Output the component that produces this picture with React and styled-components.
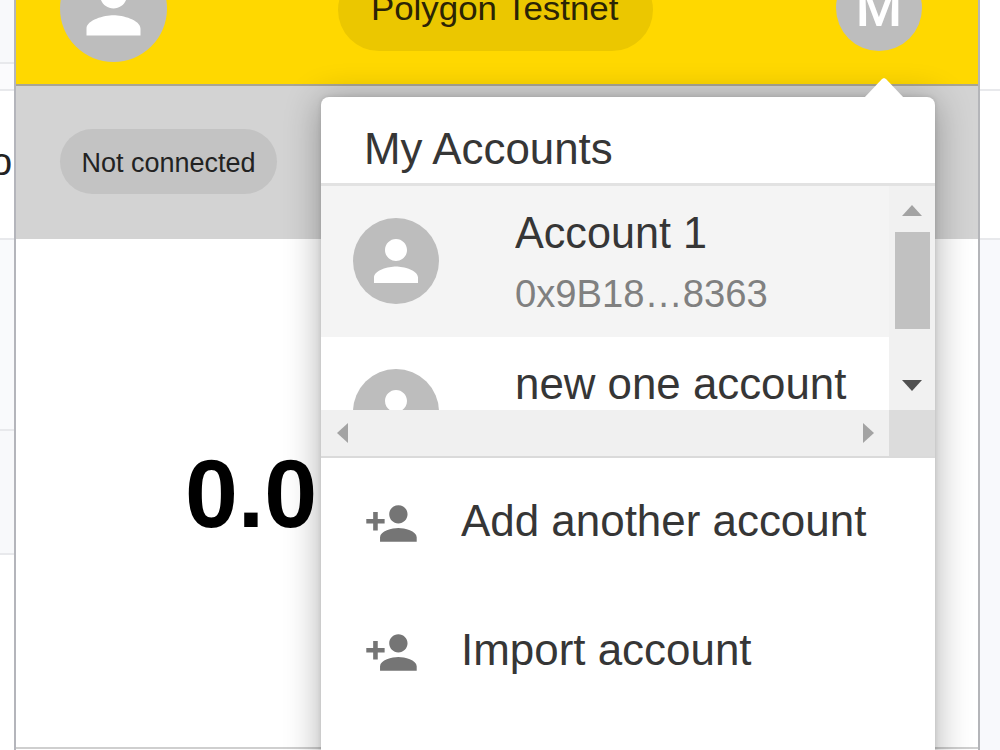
import React from "react";
import styled, { createGlobalStyle } from "styled-components";

const GlobalStyle = createGlobalStyle`
  * { box-sizing: border-box; }
  body {
    margin: 0;
    overflow: hidden;
    background: #fff;
    font-family: "Liberation Sans", Arial, sans-serif;
  }
`;

const Page = styled.div`
  position: relative;
  display: flex;
  width: 1000px;
  height: 750px;
  overflow: hidden;
`;

const Gutter = styled.div`
  width: ${(p) => p.$width}px;
  flex: none;
  display: flex;
  flex-direction: column;
  overflow: hidden;
`;

const Cell = styled.div`
  flex: none;
  display: flex;
  align-items: center;
  height: ${(p) => p.$height}px;
  background: ${(p) => p.$bg || "#fff"};
  border-bottom: 2px solid #e8e9ec;
`;

const CutLetter = styled.span`
  margin: -5px 0 0 -9px;
  font-size: 38px;
  line-height: 1;
  color: #222;
`;

const Wallet = styled.main`
  width: 966px;
  flex: none;
  display: flex;
  flex-direction: column;
  border-left: 2px solid #b4b5bb;
  border-right: 2px solid #b4b5b9;
  background: #fff;
`;

const TopBar = styled.header`
  height: 86px;
  flex: none;
  display: flex;
  justify-content: space-between;
  align-items: flex-start;
  padding: 0 56px 0 44px;
  background: #ffd800;
  border-bottom: 2px solid #a9a594;
`;

const Avatar = styled.div`
  flex: none;
  display: flex;
  align-items: center;
  justify-content: center;
  width: ${(p) => p.$size}px;
  height: ${(p) => p.$size}px;
  margin-top: ${(p) => p.$top || 0}px;
  border-radius: 50%;
  background: #bdbdbd;
  color: #fff;
  font-family: Roboto, "Liberation Sans", sans-serif;
  font-size: 53px;
  font-weight: 500;
  line-height: 1;
`;

const NetworkChip = styled.div`
  width: 315px;
  height: 82px;
  margin: -31px 0 0 -13px;
  padding-bottom: 3px;
  display: flex;
  align-items: center;
  justify-content: center;
  border-radius: 41px;
  background: #ebc700;
  color: #2b2405;
  font-size: 34px;
`;

const StatusBar = styled.section`
  height: 153px;
  flex: none;
  padding: 43px 44px;
  background: #d3d3d3;
`;

const StatusChip = styled.div`
  width: 217px;
  height: 65px;
  padding-top: 4px;
  display: flex;
  align-items: center;
  justify-content: center;
  border-radius: 33px;
  background: #c3c3c3;
  color: #222;
  font-size: 27px;
`;

const BalanceArea = styled.section`
  height: 510px;
  flex: none;
  padding: 199px 0 0 169px;
  border-bottom: 2px solid #cfcfcf;
`;

const Balance = styled.div`
  font-size: 97px;
  font-weight: 700;
  line-height: 111px;
  color: #000;
`;

const Menu = styled.aside`
  position: absolute;
  left: 321px;
  top: 97px;
  width: 614px;
  height: 700px;
  display: flex;
  flex-direction: column;
  border-radius: 8px;
  background: #fff;
  color: #363636;
  box-shadow: 0 4px 36px rgba(0, 0, 0, 0.32), 0 0 5px rgba(0, 0, 0, 0.12);
`;

const Pointer = styled.svg`
  position: absolute;
  top: -19px;
  left: 543px;
`;

const MenuTitle = styled.h1`
  height: 89px;
  flex: none;
  margin: 0;
  padding: 26px 0 0 43px;
  border-bottom: 3px solid #e2e2e2;
  font-size: 45px;
  font-weight: 400;
  line-height: 51px;
`;

const Label = styled.span`
  display: inline-block;
  white-space: nowrap;
  transform: scaleX(${(p) => p.$stretch || 1});
  transform-origin: ${(p) => p.$origin || "left"} center;
`;

const Scroller = styled.div`
  flex: none;
  height: 272px;
  display: grid;
  grid-template-columns: 568px 46px;
  grid-template-rows: 224px 46px;
  border-bottom: 2px solid #dadada;
`;

const AccountList = styled.div`
  overflow: hidden;
`;

const Account = styled.div`
  height: 151px;
  display: flex;
  padding: 32px 0 0 32px;
  background: ${(p) => (p.$active ? "#f4f4f4" : "#fff")};
`;

const AccountText = styled.div`
  margin: -11px 0 0 76px;
  display: flex;
  flex-direction: column;
`;

const AccountName = styled.div`
  font-size: 44.5px;
  line-height: 51px;
`;

const Address = styled.div`
  margin-top: 14px;
  font-size: 38px;
  line-height: 44px;
  color: #808080;
`;

const VerticalBar = styled.div`
  display: flex;
  flex-direction: column;
  align-items: center;
  padding-top: 19px;
  background: #f1f1f1;
`;

const Thumb = styled.div`
  width: 35px;
  height: 97px;
  margin: 16px 0 51px;
  background: #c1c1c1;
`;

const HorizontalBar = styled.div`
  display: flex;
  align-items: center;
  justify-content: space-between;
  padding: 0 15px 0 16px;
  background: #f0f0f0;
`;

const Corner = styled.div`
  background: #dcdcdc;
`;

const Action = styled.div`
  height: 129px;
  flex: none;
  display: flex;
  align-items: center;
  padding: 1px 0 0 43px;
  font-size: 44.5px;
  line-height: 51px;

  ${Label} {
    margin-top: -6px;
  }
`;

const ActionIcon = styled.svg`
  flex: none;
  margin-right: 42px;
  fill: #757575;
`;

const PersonIcon = ({ size }) => (
  <svg width={size} height={size} viewBox="0 0 24 24" fill="#fff">
    <path d="M12 12c2.21 0 4-1.79 4-4s-1.79-4-4-4-4 1.79-4 4 1.79 4 4 4zm0 2c-2.67 0-8 1.34-8 4v2h16v-2c0-2.66-5.33-4-8-4z" />
  </svg>
);

const AddPersonIcon = () => (
  <ActionIcon width="55" height="55" viewBox="0 0 24 24">
    <path d="M15 12c2.21 0 4-1.79 4-4s-1.79-4-4-4-4 1.79-4 4 1.79 4 4 4zm-9-2V7H4v3H1v2h3v3h2v-3h3v-2H6zm9 4c-2.67 0-8 1.34-8 4v2h16v-2c0-2.66-5.33-4-8-4z" />
  </ActionIcon>
);

const ARROWS = {
  up: [20, 11, "0,11 10,0 20,11"],
  down: [20, 11, "0,0 20,0 10,11"],
  left: [11, 20, "11,0 11,20 0,10"],
  right: [11, 20, "0,0 11,10 0,20"],
};

const Arrow = ({ dir, color = "#a3a3a3" }) => {
  const [w, h, points] = ARROWS[dir];
  return (
    <svg width={w} height={h}>
      <polygon points={points} fill={color} />
    </svg>
  );
};

export default function App() {
  return (
    <Page>
      <GlobalStyle />
      <Gutter $width={14}>
        <Cell $height={64} $bg="#f8f9fb" />
        <Cell $height={27} $bg="#fbfbfd" />
        <Cell $height={149}>
          <CutLetter>o</CutLetter>
        </Cell>
        <Cell $height={191} $bg="#f9fafc" />
        <Cell $height={124} $bg="#f8f9fb" />
      </Gutter>

      <Wallet>
        <TopBar>
          <Avatar $size={107} $top={-45}>
            <PersonIcon size={81} />
          </Avatar>
          <NetworkChip>
            <Label $origin="center" $stretch={1.025}>Polygon Testnet</Label>
          </NetworkChip>
          <Avatar $size={86} $top={-35}>M</Avatar>
        </TopBar>
        <StatusBar>
          <StatusChip>
            <Label $origin="center">Not connected</Label>
          </StatusChip>
        </StatusBar>
        <BalanceArea>
          <Balance>
            <Label $stretch={0.98}>0.0</Label>
          </Balance>
        </BalanceArea>
      </Wallet>

      <Gutter $width={20}>
        <Cell $height={91} />
        <Cell $height={149} />
        <Cell $height={520} $bg="#f8f9fc" />
      </Gutter>

      <Menu>
        <Pointer width="40" height="20">
          <polygon points="0,20 18,1 20,0 22,1 40,20" fill="#fff" />
        </Pointer>
        <MenuTitle>
          <Label $stretch={0.975}>My Accounts</Label>
        </MenuTitle>
        <Scroller>
          <AccountList>
            <Account $active>
              <Avatar $size={86}>
                <PersonIcon size={66} />
              </Avatar>
              <AccountText>
                <AccountName>
                  <Label $stretch={0.97}>Account 1</Label>
                </AccountName>
                <Address>
                  <Label $stretch={1.005}>0x9B18…8363</Label>
                </Address>
              </AccountText>
            </Account>
            <Account>
              <Avatar $size={86}>
                <PersonIcon size={66} />
              </Avatar>
              <AccountText>
                <AccountName>
                  <Label $stretch={0.985}>new one account</Label>
                </AccountName>
              </AccountText>
            </Account>
          </AccountList>
          <VerticalBar>
            <Arrow dir="up" />
            <Thumb />
            <Arrow dir="down" color="#505050" />
          </VerticalBar>
          <HorizontalBar>
            <Arrow dir="left" />
            <Arrow dir="right" />
          </HorizontalBar>
          <Corner />
        </Scroller>
        <Action>
          <AddPersonIcon />
          <Label $stretch={0.987}>Add another account</Label>
        </Action>
        <Action>
          <AddPersonIcon />
          <Label $stretch={0.987}>Import account</Label>
        </Action>
      </Menu>
    </Page>
  );
}
